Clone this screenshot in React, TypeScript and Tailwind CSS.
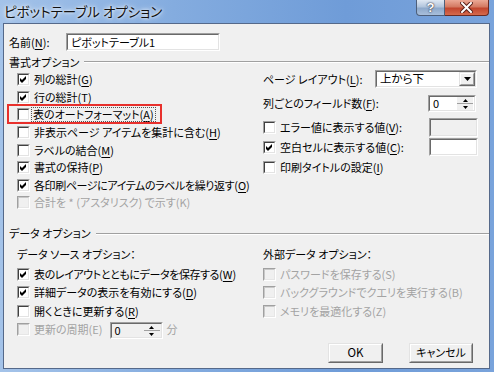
import React from "react";

const font =
  "font-['Noto_Sans_CJK_JP','Liberation_Sans',sans-serif] [font-feature-settings:'palt']";

function Chk({ checked = false, disabled = false }: { checked?: boolean; disabled?: boolean }) {
  return (
    <div className="w-[13px] h-[13px] shrink-0 border border-t-[#a0a0a0] border-l-[#a0a0a0] border-r-white border-b-white">
      <div
        className={`w-full h-full border flex items-center justify-center ${
          disabled
            ? "border-t-[#c8c8c8] border-l-[#c8c8c8] border-r-[#e6e6e6] border-b-[#e6e6e6] bg-[#f0f0f0]"
            : "border-t-[#404040] border-l-[#404040] border-r-[#e3e3e3] border-b-[#e3e3e3] bg-white"
        }`}
      >
        {checked && (
          <svg width="7" height="7" viewBox="0 0 7 7">
            <polygon points="0,2 2,4 6,0 6,3 2,7 0,5" fill="#000" />
          </svg>
        )}
      </div>
    </div>
  );
}

function U({ children }: { children: React.ReactNode }) {
  return <span className="underline underline-offset-[2px] decoration-[1px]">{children}</span>;
}

function Sunken({
  className = "",
  bg = "bg-white",
  children,
}: {
  className?: string;
  bg?: string;
  children?: React.ReactNode;
}) {
  return (
    <div className={`shrink-0 border border-t-[#a0a0a0] border-l-[#a0a0a0] border-r-white border-b-white ${className}`}>
      <div className={`w-full h-full border border-t-[#696969] border-l-[#696969] border-r-[#e3e3e3] border-b-[#e3e3e3] ${bg} flex items-center`}>
        {children}
      </div>
    </div>
  );
}

function Raised({ className = "", children }: { className?: string; children?: React.ReactNode }) {
  return (
    <div className={`border border-t-[#e3e3e3] border-l-[#e3e3e3] border-r-[#696969] border-b-[#696969] ${className}`}>
      <div className="w-full h-full border border-t-white border-l-white border-r-[#a0a0a0] border-b-[#a0a0a0] bg-[#f0f0f0] flex items-center justify-center">
        {children}
      </div>
    </div>
  );
}

function Tri({ up = false }: { up?: boolean }) {
  return (
    <svg width="5" height="3" viewBox="0 0 5 3">
      <polygon points={up ? "2.5,0 5,3 0,3" : "0,0 5,0 2.5,3"} fill="#000" />
    </svg>
  );
}

function Spinner({ w, bg = "bg-white" }: { w: string; bg?: string }) {
  return (
    <Sunken className={`${w} h-[17px]`} bg={bg}>
      <span className="pl-[3px] flex-1 leading-none">0</span>
      <div className="w-[16px] h-full flex flex-col mr-[1px]">
        <div className="flex-1 flex items-center justify-center bg-[#f0f0f0] border-b border-[#a0a0a0]">
          <Tri up />
        </div>
        <div className="flex-1 flex items-center justify-center bg-[#f0f0f0]">
          <Tri />
        </div>
      </div>
    </Sunken>
  );
}

function Item({
  checked = false,
  disabled = false,
  h,
  children,
}: {
  checked?: boolean;
  disabled?: boolean;
  h: string;
  children: React.ReactNode;
}) {
  return (
    <div className={`${h} flex items-center`}>
      <Chk checked={checked} disabled={disabled} />
      <span className={`ml-[4px] leading-none whitespace-nowrap ${disabled ? "text-[#a3a3a3]" : ""}`}>{children}</span>
    </div>
  );
}

function Header({ children }: { children: React.ReactNode }) {
  return (
    <div className="h-[14px] pl-[5px] flex items-center">
      <span className="leading-none whitespace-nowrap">{children}</span>
      <div className="flex-1 ml-[5px] h-[2px] border-t border-t-[#a0a0a0] border-b border-b-white" />
    </div>
  );
}

export default function App() {
  const rowH = "h-[17.6px]";
  const dRowH = "h-[18.5px]";
  return (
    <div
      className={`w-[494px] h-[372px] flex flex-col overflow-hidden bg-[linear-gradient(90deg,#a4c3e9_0%,#84acdf_35%,#6f9cd8_70%,#79a3db_100%)] ${font} text-[11px] text-black`}
    >
      {/* Title bar */}
      <div className="h-[23px] shrink-0 flex items-start">
        <div className="pl-[4px] pt-[2px] text-[13.5px] leading-[18px] text-[#111] [text-shadow:0_0_6px_#ffffff,0_0_3px_#ffffff]">
          ピボットテーブル オプション
        </div>
        <div className="ml-auto mr-[5px] flex">
          <div className="w-[29px] h-[16px] rounded-bl-[4px] border border-t-0 border-[#4d5f7a] bg-[linear-gradient(#dfe8f3,#b2c5dd_45%,#8ea9cb_55%,#a8bfdc)] flex items-center justify-center">
            <span className="text-white font-bold text-[13px] leading-none [text-shadow:0_0_2px_#334,0_0_1px_#223] font-['Liberation_Sans',sans-serif]">
              ?
            </span>
          </div>
          <div className="w-[44px] h-[16px] rounded-br-[4px] border border-t-0 border-l-0 border-[#6a2a22] bg-[linear-gradient(#eba996,#d47a62_45%,#c2462e_55%,#d56a4d)] flex items-center justify-center">
            <svg width="13" height="11" viewBox="0 0 13 11">
              <path d="M2 1 L11 10 M11 1 L2 10" stroke="#5a2018" strokeWidth="4" strokeLinecap="square" />
              <path d="M2 1 L11 10 M11 1 L2 10" stroke="#fff" strokeWidth="2" strokeLinecap="square" />
            </svg>
          </div>
        </div>
      </div>

      {/* Client area */}
      <div className="flex-1 ml-[3px] mr-[4px] mb-[3px] border border-[#55698a] bg-[#f0f0f0] flex flex-col">
        {/* name row */}
        <div className="mt-[9px] h-[18px] pl-[5px] flex items-center">
          <span className="w-[57px] leading-none">
            名前(<U>N</U>):
          </span>
          <Sunken className="w-[154px] h-[18px]">
            <span className="pl-[3px] leading-none">ピボットテーブル1</span>
          </Sunken>
        </div>

        {/* 書式オプション */}
        <div className="mt-[4px]">
          <Header>書式オプション</Header>
        </div>

        <div className="flex mt-[2px]">
          <div className="ml-[13px] w-[246px] flex flex-col">
            <Item checked h={rowH}>
              列の総計(<U>G</U>)
            </Item>
            <Item checked h={rowH}>
              行の総計(<U>T</U>)
            </Item>
            <div className={`${rowH} relative flex items-center`}>
              <Chk />
              <span className="ml-[3px] leading-none whitespace-nowrap outline-1 outline-dotted outline-[#555] outline-offset-[1px]">
                表のオートフォーマット(<U>A</U>)
              </span>
              <div className="absolute left-[-10px] top-[-2px] w-[155px] h-[20px] border-2 border-[#e8302c]" />
            </div>
            <Item h={rowH}>
              非表示ページ アイテムを集計に含む(<U>H</U>)
            </Item>
            <Item h={rowH}>
              ラベルの結合(<U>M</U>)
            </Item>
            <Item checked h={rowH}>
              書式の保持(<U>P</U>)
            </Item>
            <Item checked h={rowH}>
              <span className="tracking-[-0.4px]">各印刷ページにアイテムのラベルを繰り返す</span>(<U>O</U>)
            </Item>
            <Item disabled h={rowH}>
              合計を * (アスタリスク) で示す(K)
            </Item>
          </div>

          <div className="w-[215px] flex flex-col">
            <div className="-mt-[1px] h-[18px] flex items-center">
              <span className="leading-none whitespace-nowrap">
                ページ レイアウト(<U>L</U>):
              </span>
              <Sunken className="ml-auto mr-[1px] w-[102px] h-[18px]">
                <span className="pl-[3px] flex-1 leading-none text-[11.5px]">上から下</span>
                <Raised className="w-[16px] h-[14px] mr-[0px]">
                  <svg width="7" height="4" viewBox="0 0 7 4">
                    <polygon points="0,0 7,0 3.5,4" fill="#000" />
                  </svg>
                </Raised>
              </Sunken>
            </div>
            <div className="mt-[7px] h-[17px] flex items-center">
              <span className="leading-none whitespace-nowrap">
                列ごとのフィールド数(<U>F</U>):
              </span>
              <div className="ml-auto mr-[2px]">
                <Spinner w="w-[48px]" />
              </div>
            </div>
            <div className="mt-[6px] h-[19px] flex items-center">
              <Chk />
              <span className="ml-[4px] leading-none whitespace-nowrap">
                エラー値に表示する値(<U>V</U>):
              </span>
              <Sunken className="ml-auto w-[49px] h-[19px]" bg="bg-[#f0f0f0]" />
            </div>
            <div className="mt-[1px] h-[18px] flex items-center">
              <Chk checked />
              <span className="ml-[4px] leading-none whitespace-nowrap">
                空白セルに表示する値(<U>C</U>):
              </span>
              <Sunken className="ml-auto w-[49px] h-[18px]" />
            </div>
            <div className="mt-[2px] h-[18px] flex items-center">
              <Chk />
              <span className="ml-[4px] leading-none whitespace-nowrap">
                印刷タイトルの設定(<U>I</U>)
              </span>
            </div>
          </div>
        </div>

        {/* データ オプション */}
        <div className="mt-[15px]">
          <Header>データ オプション</Header>
        </div>

        <div className="flex mt-[7px]">
          <div className="ml-[13px] w-[246px] flex flex-col">
            <div className="h-[14px] flex items-center leading-none">データ ソース オプション：</div>
            <div className="mt-[3px] flex flex-col">
              <Item checked h={dRowH}>
                <span className="tracking-[-0.4px]">表のレイアウトとともにデータを保存する</span>(<U>W</U>)
              </Item>
              <Item checked h={dRowH}>
                詳細データの表示を有効にする(<U>D</U>)
              </Item>
              <Item h={dRowH}>
                開くときに更新する(<U>R</U>)
              </Item>
              <div className={`${dRowH} flex items-center`}>
                <Chk disabled />
                <span className="ml-[4px] leading-none whitespace-nowrap text-[#a3a3a3]">更新の周期(E)</span>
                <div className="ml-[7px] -mb-[2px]">
                  <Spinner w="w-[53px]" bg="bg-[#f0f0f0]" />
                </div>
                <span className="ml-[4px] leading-none text-[#a3a3a3]">分</span>
              </div>
            </div>
          </div>
          <div className="w-[215px] flex flex-col">
            <div className="h-[14px] flex items-center leading-none">外部データ オプション：</div>
            <div className="mt-[3px] flex flex-col">
              <Item disabled h={dRowH}>
                パスワードを保存する(S)
              </Item>
              <Item disabled h={dRowH}>
                バックグラウンドでクエリを実行する(B)
              </Item>
              <Item disabled h={dRowH}>
                メモリを最適化する(Z)
              </Item>
            </div>
          </div>
        </div>

        {/* Buttons */}
        <div className="mt-[4px] flex justify-end pr-[16px] gap-[26px]">
          <Raised className="w-[55px] h-[20px]">
            <span className="leading-none text-[11.5px]">OK</span>
          </Raised>
          <Raised className="w-[64px] h-[20px]">
            <span className="leading-none">キャンセル</span>
          </Raised>
        </div>
      </div>
    </div>
  );
}
